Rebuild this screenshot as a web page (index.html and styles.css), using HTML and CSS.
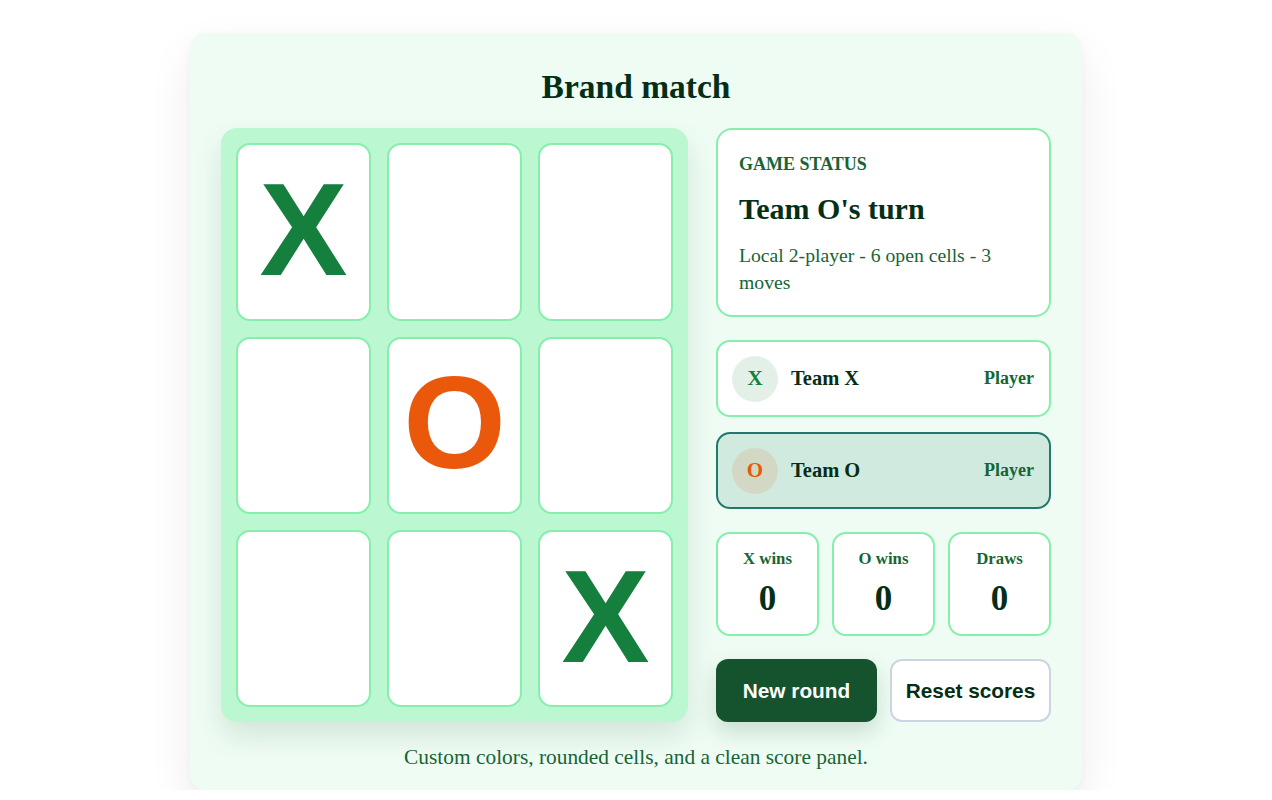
FILE: index.html
```html
<!DOCTYPE html>
<html lang="en">
<head>
<meta charset="utf-8">
<title>Brand match</title>
<link rel="stylesheet" href="styles.css">
</head>
<body>
  <main class="card">
    <h1 class="title">Brand match</h1>
    <div class="layout">
      <div class="board">
        <button class="cell mark-x">X</button>
        <button class="cell"></button>
        <button class="cell"></button>
        <button class="cell"></button>
        <button class="cell mark-o">O</button>
        <button class="cell"></button>
        <button class="cell"></button>
        <button class="cell"></button>
        <button class="cell mark-x">X</button>
      </div>
      <aside class="panel">
        <section class="status">
          <p class="status-label">Game status</p>
          <h2 class="status-turn">Team O's turn</h2>
          <p class="status-meta">Local 2-player - 6 open cells - 3 moves</p>
        </section>
        <div class="teams">
          <div class="team">
            <span class="avatar avatar-x">X</span>
            <span class="team-name">Team X</span>
            <span class="team-role">Player</span>
          </div>
          <div class="team team-active">
            <span class="avatar avatar-o">O</span>
            <span class="team-name">Team O</span>
            <span class="team-role">Player</span>
          </div>
        </div>
        <div class="scores">
          <div class="score">
            <span class="score-label">X wins</span>
            <span class="score-value">0</span>
          </div>
          <div class="score">
            <span class="score-label">O wins</span>
            <span class="score-value">0</span>
          </div>
          <div class="score">
            <span class="score-label">Draws</span>
            <span class="score-value">0</span>
          </div>
        </div>
        <div class="actions">
          <button class="btn btn-primary">New round</button>
          <button class="btn btn-secondary">Reset scores</button>
        </div>
      </aside>
    </div>
    <p class="footnote">Custom colors, rounded cells, and a clean score panel.</p>
  </main>
</body>
</html>
```
FILE: styles.css
```css
* {
  box-sizing: border-box;
}

html,
body {
  margin: 0;
  background: #ffffff;
}

body {
  font-family: "Liberation Serif", "Times New Roman", serif;
  color: #052e16;
  padding-top: 33px;
}

.card {
  width: 892px;
  margin: 0 auto;
  padding: 34px 31px 18px;
  background: #effcf4;
  border-radius: 16px;
  box-shadow: 0 18px 44px rgba(15, 23, 42, 0.08), 0 2px 8px rgba(15, 23, 42, 0.03);
}

.title {
  margin: 0 0 21px;
  text-align: center;
  font-size: 33.5px;
  line-height: 1.2;
  font-weight: 700;
  color: #052e16;
}

.layout {
  display: grid;
  grid-template-columns: 467px 335px;
  gap: 28px;
  height: 594px;
}

/* game board */
.board {
  display: grid;
  grid-template-columns: repeat(3, 1fr);
  grid-template-rows: repeat(3, 1fr);
  gap: 16px;
  padding: 15px;
  background: #bbf7d0;
  border-radius: 16px;
  box-shadow: 0 14px 28px rgba(20, 83, 45, 0.13);
}

.cell {
  display: flex;
  align-items: center;
  justify-content: center;
  padding: 0 0 4px;
  background: #ffffff;
  border: 2px solid #86efac;
  border-radius: 14px;
  font-family: "Liberation Sans", Arial, sans-serif;
  font-size: 132px;
  font-weight: 700;
  line-height: 1;
  cursor: pointer;
}

.mark-x {
  color: #15803d;
}

.mark-o {
  color: #ea580c;
}

/* side panel */
.panel {
  display: flex;
  flex-direction: column;
  justify-content: space-between;
}

.status {
  padding: 22px 20px 19px 21px;
  background: #ffffff;
  border: 2px solid #86efac;
  border-radius: 16px;
}

.status-label {
  margin: 0;
  font-size: 18px;
  line-height: 25.2px;
  font-weight: 700;
  text-transform: uppercase;
  color: #166534;
}

.status-turn {
  margin: 14px 0 0;
  font-size: 30px;
  line-height: 36px;
  font-weight: 700;
  color: #052e16;
}

.status-meta {
  margin: 15px 0 0;
  font-size: 19.7px;
  line-height: 27px;
  color: #166534;
}

.teams {
  display: flex;
  flex-direction: column;
  gap: 15px;
}

.team {
  display: flex;
  align-items: center;
  gap: 12px;
  height: 77px;
  padding: 0 15px 0 14px;
  background: #ffffff;
  border: 2px solid #86efac;
  border-radius: 14px;
}

.team-active {
  background: #d1eae0;
  border-color: #22786b;
}

.avatar {
  display: flex;
  align-items: center;
  justify-content: center;
  width: 46px;
  height: 46px;
  border-radius: 50%;
  font-size: 21px;
  font-weight: 700;
}

.avatar-x {
  background: rgba(21, 128, 61, 0.12);
  color: #15803d;
}

.avatar-o {
  background: rgba(234, 88, 12, 0.12);
  color: #ea580c;
}

.team-name {
  flex: 1;
  margin-left: 1px;
  font-size: 20.5px;
  font-weight: 700;
  color: #052e16;
}

.team-role {
  font-size: 18px;
  font-weight: 700;
  color: #166534;
}

.scores {
  display: grid;
  grid-template-columns: repeat(3, 1fr);
  gap: 13px;
}

.score {
  display: flex;
  flex-direction: column;
  align-items: center;
  gap: 8px;
  height: 104px;
  padding: 15px 8px 0;
  background: #ffffff;
  border: 2px solid #86efac;
  border-radius: 14px;
}

.score-label {
  font-size: 16.8px;
  line-height: 20.4px;
  font-weight: 700;
  color: #166534;
}

.score-value {
  font-size: 35px;
  line-height: 42px;
  font-weight: 700;
  color: #052e16;
}

.actions {
  display: grid;
  grid-template-columns: 1fr 1fr;
  gap: 13px;
}

.btn {
  height: 63px;
  border-radius: 12px;
  font-family: "Liberation Sans", Arial, sans-serif;
  font-size: 20.8px;
  font-weight: 700;
  cursor: pointer;
}

.btn-primary {
  background: #14532d;
  color: #ffffff;
  border: 0;
  box-shadow: 0 10px 22px rgba(20, 83, 45, 0.18);
}

.btn-secondary {
  background: #ffffff;
  color: #052e16;
  border: 2px solid #cdd3e1;
}

.footnote {
  margin: 20px 0 0;
  text-align: center;
  font-size: 21.4px;
  line-height: 30px;
  color: #166534;
}
```
